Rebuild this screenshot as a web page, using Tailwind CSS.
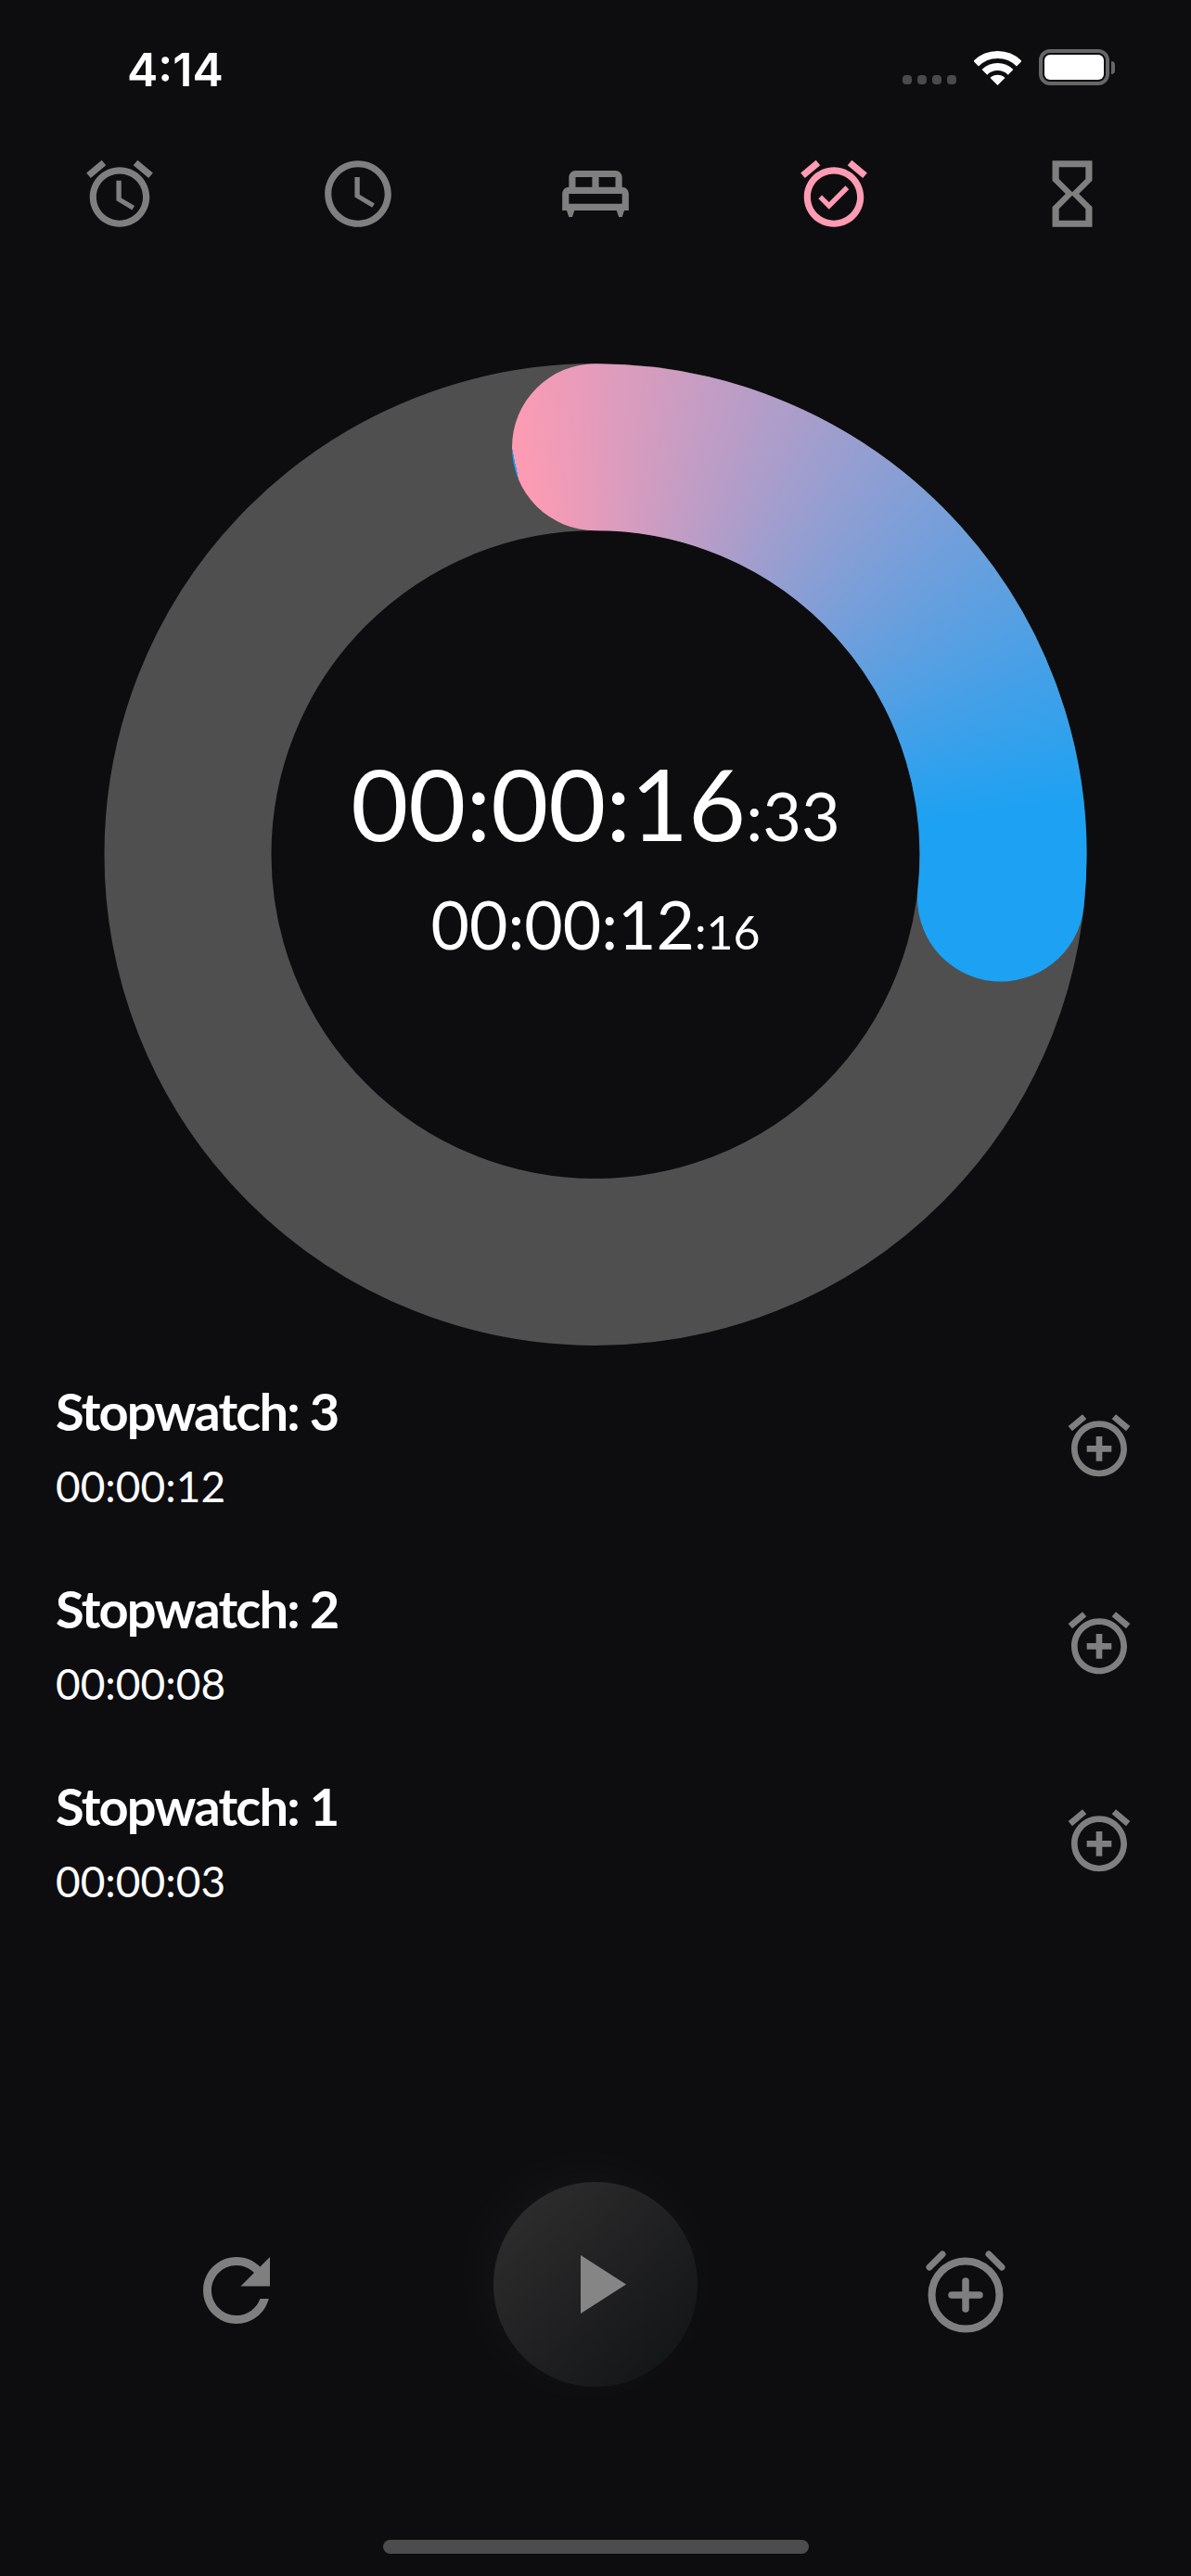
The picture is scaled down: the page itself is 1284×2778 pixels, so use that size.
<!DOCTYPE html>
<html lang="en">
<head>
    <meta charset="UTF-8">
    <meta name="viewport" content="width=device-width, initial-scale=1.0">
    <title>Stopwatch</title>
    <script src="https://cdn.jsdelivr.net/npm/@tailwindcss/browser@4"></script>
</head>
<body class="bg-[#0d0d10]">
    <div class="w-[1284px] h-[2778px] overflow-hidden bg-[#0d0d10] text-white font-['Lato',sans-serif]">

        <!-- Status bar -->
        <div class="flex items-start h-[50px] pt-[50px] pl-[137px] pr-[82px] box-content">
            <span class="font-['Inter',sans-serif] font-semibold text-[50px] leading-none">4:14</span>
            <div class="ml-auto flex gap-[6px] mt-[31px]">
                <span class="w-[10px] h-[10px] rounded-[4px] bg-[#4a4a4a]"></span>
                <span class="w-[10px] h-[10px] rounded-[4px] bg-[#4a4a4a]"></span>
                <span class="w-[10px] h-[10px] rounded-[4px] bg-[#4a4a4a]"></span>
                <span class="w-[10px] h-[10px] rounded-[4px] bg-[#4a4a4a]"></span>
            </div>
            <svg class="ml-[19px] mt-[4px]" width="51" height="38" viewBox="0 0 51 38" fill="none" stroke="#fff" stroke-width="8">
                <path d="M2.2 14.7A33 33 0 0 1 48.8 14.7"/>
                <path d="M11.4 23.9A20 20 0 0 1 39.6 23.9"/>
                <path d="M25.5 38L17.5 30A11.3 11.3 0 0 1 33.5 30Z" fill="#fff" stroke="none"/>
            </svg>
            <div class="ml-[19px] mt-[3px] flex items-center gap-[2px]">
                <div class="w-[76px] h-[39px] border-[4px] border-[#666] rounded-[12px] p-[2px]">
                    <div class="w-full h-full bg-white rounded-[6px]"></div>
                </div>
                <span class="w-[4px] h-[14px] rounded-r-full bg-[#666]"></span>
            </div>
        </div>

        <!-- Tabs -->
        <div class="grid grid-cols-5 mt-[66px] pl-[1px] justify-items-center text-[#7f7f7f]">
            <svg width="86" height="86" viewBox="0 0 24 24" fill="currentColor"><path d="M22 5.72l-4.6-3.86-1.29 1.53 4.6 3.86L22 5.72zM7.88 3.39L6.6 1.86 2 5.71l1.29 1.53 4.59-3.85zM12.5 8H11v6l4.75 2.85.75-1.23-4-2.37V8zM12 4c-4.97 0-9 4.03-9 9s4.02 9 9 9c4.97 0 9-4.03 9-9s-4.03-9-9-9zm0 16c-3.87 0-7-3.13-7-7s3.13-7 7-7 7 3.13 7 7-3.13 7-7 7z"/></svg>
            <svg width="86" height="86" viewBox="0 0 24 24" fill="currentColor"><path d="M11.99 2C6.47 2 2 6.48 2 12s4.47 10 9.99 10C17.52 22 22 17.52 22 12S17.52 2 11.99 2zM12 20c-4.42 0-8-3.58-8-8s3.58-8 8-8 8 3.58 8 8-3.58 8-8 8zm.5-13H11v6l5.25 3.15.75-1.23-4.5-2.67z"/></svg>
            <svg width="86" height="86" viewBox="0 0 24 24" fill="currentColor"><path d="M22 12c0-1.1-.9-2-2-2V7c0-1.1-.9-2-2-2H6c-1.1 0-2 .9-2 2v3c-1.1 0-2 .9-2 2v5h1.33L4 19h1l.67-2h12.67l.66 2h1l.67-2H22v-5zm-4-2h-5V7h5v3zM6 7h5v3H6V7zm-2 5h16v3H4v-3z"/></svg>
            <svg class="text-[#ff9bb3]" width="86" height="86" viewBox="0 0 24 24" fill="currentColor"><path d="M22 5.72l-4.6-3.86-1.29 1.53 4.6 3.86L22 5.72zM7.88 3.39L6.6 1.86 2 5.71l1.29 1.53 4.59-3.85zM12 4c-4.97 0-9 4.03-9 9s4.02 9 9 9c4.97 0 9-4.03 9-9s-4.03-9-9-9zm0 16c-3.87 0-7-3.13-7-7s3.13-7 7-7 7 3.13 7 7-3.13 7-7 7zm-1.46-5.47L8.41 12.4l-1.06 1.06 3.18 3.18 6-6-1.06-1.06-4.93 4.95z"/></svg>
            <svg width="86" height="86" viewBox="0 0 24 24" fill="currentColor"><path d="M6 2v6h.01L6 8.01 10 12l-4 4 .01.01H6V22h12v-5.99h-.01L18 16l-4-4 4-3.99-.01-.01H18V2H6zm10 14.5V20H8v-3.5l4-4 4 4zm-4-5l-4-4V4h8v3.5l-4 4z"/></svg>
        </div>

        <!-- Progress ring -->
        <div class="relative w-[1060px] h-[1060px] ml-[112px] mt-[139px]">
            <svg class="block" width="1060" height="1060" viewBox="0 0 1060 1060" fill="none">
                <defs>
                    <mask id="arc" maskUnits="userSpaceOnUse" x="0" y="0" width="1060" height="1060">
                        <path d="M530 91.25A439.25 439.25 0 0 1 967 577.5" stroke="#fff" stroke-width="180" stroke-linecap="round"/>
                    </mask>
                </defs>
                <circle cx="530" cy="530.5" r="439.5" stroke="#4f4f4f" stroke-width="180"/>
                <g mask="url(#arc)">
                    <foreignObject x="0" y="0" width="1060" height="1060">
                        <div class="w-full h-full bg-[conic-gradient(from_-11.6deg,#ff9bb3_0deg,#1da1f2_96deg)]"></div>
                    </foreignObject>
                </g>
            </svg>
            <div class="absolute inset-0 flex flex-col items-center pt-[421px]">
                <div class="text-[107px] leading-none whitespace-nowrap">00:00:16<span class="text-[72px] leading-none">:33</span></div>
                <div class="mt-[42px] text-[71.5px] leading-none whitespace-nowrap">00:00:12<span class="text-[50px] leading-none">:16</span></div>
            </div>
        </div>

        <!-- Laps -->
        <div class="mt-[39px] pl-[60px] pr-[59px]">
            <div class="flex justify-between items-start h-[213px]">
                <div>
                    <div class="text-[56px] leading-[64px] font-bold tracking-[-1.8px]">Stopwatch: 3</div>
                    <div class="text-[46px] leading-[56px] mt-[21px]">00:00:12</div>
                </div>
                <svg class="mt-[29px] text-[#7f7f7f]" width="80" height="80" viewBox="0 0 24 24" fill="currentColor"><path d="M7.88 3.39L6.6 1.86 2 5.71l1.29 1.53 4.59-3.85zM22 5.72l-4.6-3.86-1.29 1.53 4.6 3.86L22 5.72zM12 4c-4.97 0-9 4.03-9 9s4.02 9 9 9c4.97 0 9-4.03 9-9s-4.03-9-9-9zm0 16c-3.87 0-7-3.13-7-7s3.13-7 7-7 7 3.13 7 7-3.13 7-7 7zm1-11h-2v3H8v2h3v3h2v-3h3v-2h-3V9z"/></svg>
            </div>
            <div class="flex justify-between items-start h-[213px]">
                <div>
                    <div class="text-[56px] leading-[64px] font-bold tracking-[-1.8px]">Stopwatch: 2</div>
                    <div class="text-[46px] leading-[56px] mt-[21px]">00:00:08</div>
                </div>
                <svg class="mt-[29px] text-[#7f7f7f]" width="80" height="80" viewBox="0 0 24 24" fill="currentColor"><path d="M7.88 3.39L6.6 1.86 2 5.71l1.29 1.53 4.59-3.85zM22 5.72l-4.6-3.86-1.29 1.53 4.6 3.86L22 5.72zM12 4c-4.97 0-9 4.03-9 9s4.02 9 9 9c4.97 0 9-4.03 9-9s-4.03-9-9-9zm0 16c-3.87 0-7-3.13-7-7s3.13-7 7-7 7 3.13 7 7-3.13 7-7 7zm1-11h-2v3H8v2h3v3h2v-3h3v-2h-3V9z"/></svg>
            </div>
            <div class="flex justify-between items-start h-[213px]">
                <div>
                    <div class="text-[56px] leading-[64px] font-bold tracking-[-1.8px]">Stopwatch: 1</div>
                    <div class="text-[46px] leading-[56px] mt-[21px]">00:00:03</div>
                </div>
                <svg class="mt-[29px] text-[#7f7f7f]" width="80" height="80" viewBox="0 0 24 24" fill="currentColor"><path d="M7.88 3.39L6.6 1.86 2 5.71l1.29 1.53 4.59-3.85zM22 5.72l-4.6-3.86-1.29 1.53 4.6 3.86L22 5.72zM12 4c-4.97 0-9 4.03-9 9s4.02 9 9 9c4.97 0 9-4.03 9-9s-4.03-9-9-9zm0 16c-3.87 0-7-3.13-7-7s3.13-7 7-7 7 3.13 7 7-3.13 7-7 7zm1-11h-2v3H8v2h3v3h2v-3h3v-2h-3V9z"/></svg>
            </div>
        </div>

        <!-- Controls -->
        <div class="flex items-start mt-[224px] pl-[201px]">
            <svg class="mt-[63px] text-[#7f7f7f]" width="108" height="108" viewBox="0 0 24 24" fill="currentColor"><path d="M17.65 6.35C16.2 4.9 14.21 4 12 4c-4.42 0-7.99 3.58-7.99 8s3.57 8 7.99 8c3.73 0 6.84-2.55 7.73-6h-2.08c-.82 2.33-3.04 4-5.65 4-3.31 0-6-2.69-6-6s2.69-6 6-6c1.66 0 3.14.69 4.22 1.78L13 11h7V4l-2.35 2.35z"/></svg>
            <div class="ml-[223px] w-[220px] h-[221px] rounded-full flex items-center justify-center bg-gradient-to-br from-[#303030] to-[#111214] shadow-[-10px_-10px_70px_rgba(255,255,255,0.035)]">
                <svg class="ml-[16px]" width="49" height="63" viewBox="0 0 49 63" fill="#858585"><path d="M0 0L49 31.5 0 63Z"/></svg>
            </div>
            <svg class="ml-[241px] mt-[74px]" width="96" height="96" viewBox="0 0 96 96" fill="none" stroke="#7f7f7f" stroke-linecap="round">
                <circle cx="48" cy="48" r="36.5" stroke-width="8"/>
                <path d="M48 33V63M33 48H63" stroke-width="7.5"/>
                <path d="M9 18L23 4M87 18L73 4" stroke-width="7"/>
            </svg>
        </div>

        <!-- Home indicator -->
        <div class="mt-[165px] ml-[413px] w-[459px] h-[15px] rounded-full bg-[#4c4c4c]"></div>
    </div>
</body>
</html>
